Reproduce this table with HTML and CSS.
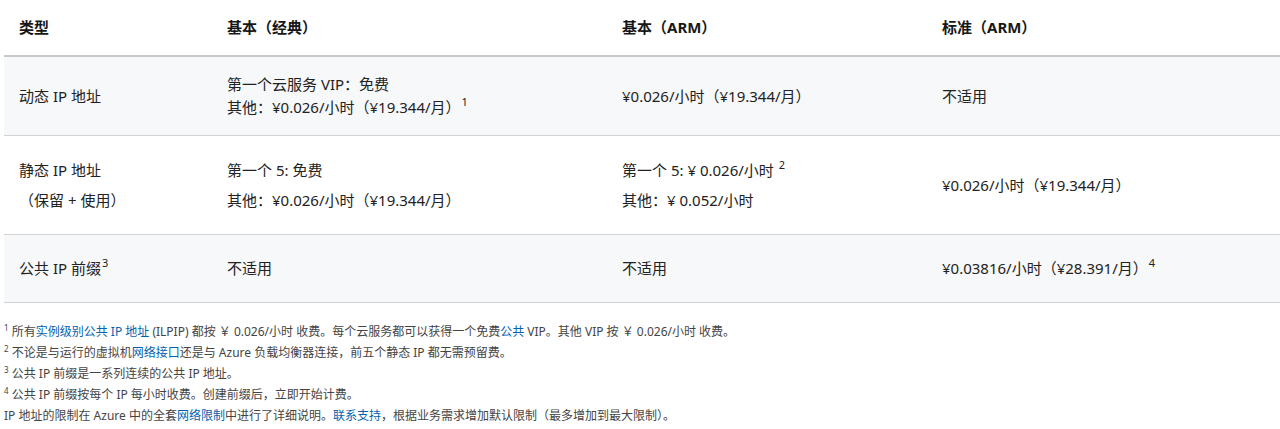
FILE: index.html
```html
<!DOCTYPE html>
<html lang="zh-CN">
<head>
<meta charset="utf-8">
<link rel="stylesheet" href="styles.css">
</head>
<body>
<div class="page">
<table class="price">
  <colgroup>
    <col class="c1"><col class="c2"><col class="c3"><col class="c4">
  </colgroup>
  <thead>
    <tr><th>类型</th><th>基本（经典）</th><th>基本（ARM）</th><th>标准（ARM）</th></tr>
  </thead>
  <tbody>
    <tr class="alt r1">
      <td>动态 IP 地址</td>
      <td><div>第一个云服务 VIP：免费</div><div>其他：¥0.026/小时（¥19.344/月）<sup class="s">1</sup></div></td>
      <td>¥0.026/小时（¥19.344/月）</td>
      <td>不适用</td>
    </tr>
    <tr class="r2">
      <td><div class="ln">静态 IP 地址</div><div class="ln">（保留 + 使用）</div></td>
      <td><div class="ln">第一个 5: 免费</div><div class="ln">其他：¥0.026/小时（¥19.344/月）</div></td>
      <td><div class="ln">第一个 5: ¥ 0.026/小时 <sup class="s">2</sup></div><div class="ln">其他：¥ 0.052/小时</div></td>
      <td>¥0.026/小时（¥19.344/月）</td>
    </tr>
    <tr class="alt r3">
      <td>公共 IP 前缀<sup class="s">3</sup></td>
      <td>不适用</td>
      <td>不适用</td>
      <td>¥0.03816/小时（¥28.391/月）<sup class="s s4">4</sup></td>
    </tr>
  </tbody>
</table>
<div class="notes">
  <p><sup>1</sup> 所有<a href="#">实例级别公共 IP 地址</a> (ILPIP) 都按 ￥ 0.026/小时 收费。每个云服务都可以获得一个免费<a href="#">公共</a> VIP。其他 VIP 按 ￥ 0.026/小时 收费。</p>
  <p><sup>2</sup> 不论是与运行的虚拟机<a href="#">网络接口</a>还是与 Azure 负载均衡器连接，前五个静态 IP 都无需预留费。</p>
  <p><sup>3</sup> 公共 IP 前缀是一系列连续的公共 IP 地址。</p>
  <p><sup>4</sup> 公共 IP 前缀按每个 IP 每小时收费。创建前缀后，立即开始计费。</p>
  <p>IP 地址的限制在 Azure 中的全套<a href="#">网络限制</a>中进行了详细说明。<a href="#">联系支持</a>，根据业务需求增加默认限制（最多增加到最大限制）。</p>
</div>
</div>
</body>
</html>
```

FILE: styles.css
```css
html, body {
  margin: 0;
  padding: 0;
  background: #fff;
}
body {
  font-family: "Segoe UI", "Noto Sans", "Noto Sans CJK SC", sans-serif;
  color: #222;
}
.page {
  padding-left: 4px;
}
.price {
  width: 1276px;
  border-collapse: collapse;
  font-size: 15px;
  line-height: 23px;
}
.c1 { width: 208px; }
.c2 { width: 395px; }
.c3 { width: 320px; }
.c4 { width: 353px; }
.price th {
  text-align: left;
  font-weight: 700;
  color: #171717;
  padding: 16px 15px 16px;
  border-bottom: 2px solid #c8c8c8;
  line-height: 23px;
}
.price td {
  padding: 16px 15px;
  vertical-align: middle;
  border-bottom: 1px solid #d2d2d2;
}
.price tr.alt td {
  background: #f7f8fa;
}
.price tr.r1 td {
  padding-top: 16px;
  padding-bottom: 16px;
}
.price tr.r2 td {
  padding-top: 19px;
  padding-bottom: 19px;
}
.price tr.r2 .ln {
  line-height: 30px;
}
.price tr.r3 td {
  padding-top: 22px;
  padding-bottom: 22px;
}
.s {
  font-size: 11px;
  line-height: 0;
  vertical-align: 7px;
  margin-left: 1px;
}
.notes {
  padding-top: 18px;
  font-size: 12px;
  line-height: 21px;
  color: #444;
}
.notes p {
  margin: 0;
}
.notes sup {
  font-size: 8px;
  line-height: 0;
  vertical-align: 5px;
}
.notes a {
  color: #0062b0;
  text-decoration: none;
}
```
